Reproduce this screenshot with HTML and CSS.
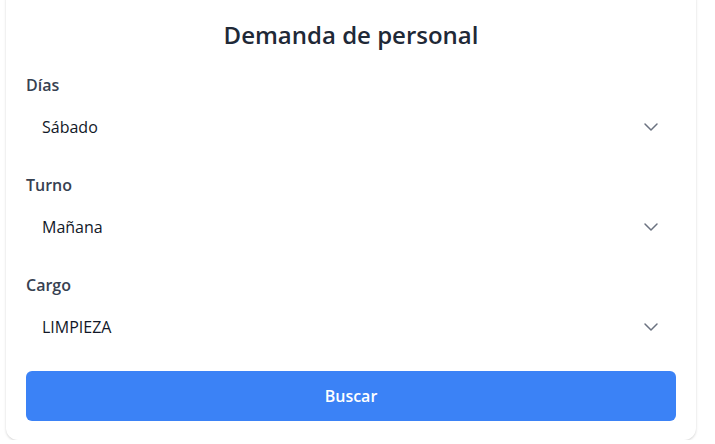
FILE: index.html
```html
<!DOCTYPE html>
<html lang="es">
<head>
<meta charset="utf-8">
<title>Demanda de personal</title>
<link rel="stylesheet" href="styles.css">
</head>
<body>
<main class="card">
  <h1 class="title">Demanda de personal</h1>
  <div class="field">
    <label class="label">Días</label>
    <div class="select">
      <span class="value">Sábado</span>
      <svg class="chevron" viewBox="0 0 20 20" width="30" height="30"><path d="M6 8l4 4 4-4" fill="none" stroke="#6b7280" stroke-width="1" stroke-linecap="round" stroke-linejoin="round"/></svg>
    </div>
  </div>
  <div class="field">
    <label class="label">Turno</label>
    <div class="select">
      <span class="value">Mañana</span>
      <svg class="chevron" viewBox="0 0 20 20" width="30" height="30"><path d="M6 8l4 4 4-4" fill="none" stroke="#6b7280" stroke-width="1" stroke-linecap="round" stroke-linejoin="round"/></svg>
    </div>
  </div>
  <div class="field">
    <label class="label">Cargo</label>
    <div class="select">
      <span class="value">LIMPIEZA</span>
      <svg class="chevron" viewBox="0 0 20 20" width="30" height="30"><path d="M6 8l4 4 4-4" fill="none" stroke="#6b7280" stroke-width="1" stroke-linecap="round" stroke-linejoin="round"/></svg>
    </div>
  </div>
  <button class="btn" type="button">Buscar</button>
</main>
</body>
</html>
```
FILE: styles.css
```css
html, body {
  margin: 0;
  padding: 0;
  background: #ffffff;
}
body {
  font-family: "Open Sans", "Noto Sans", "Liberation Sans", sans-serif;
  color: #111827;
  overflow: hidden;
}
.card {
  box-sizing: border-box;
  width: 690px;
  margin: -12px 0 0 6px;
  padding: 31px 20px 19px;
  background: #ffffff;
  border-radius: 12px;
  box-shadow: 0 1px 3px rgba(0,0,0,0.12), 0 1px 2px rgba(0,0,0,0.06);
}
.title {
  margin: 0 0 22px;
  font-size: 24px;
  line-height: 32px;
  font-weight: 600;
  color: #1f2937;
  text-align: center;
}
.field {
  margin-bottom: 24px;
}
.field:last-of-type {
  margin-bottom: 22px;
}
.label {
  display: block;
  font-size: 16px;
  line-height: 24px;
  font-weight: 600;
  color: #374151;
  margin-bottom: 8px;
}
.select {
  height: 44px;
  display: flex;
  align-items: center;
  justify-content: space-between;
  padding: 0 10px 0 16px;
  font-size: 16px;
  color: #111827;
}
.chevron {
  display: block;
}
.btn {
  display: block;
  width: 100%;
  height: 50px;
  border: 0;
  border-radius: 6px;
  background: #3b82f6;
  color: #ffffff;
  font-family: inherit;
  font-size: 16px;
  font-weight: 600;
  cursor: pointer;
}
```
